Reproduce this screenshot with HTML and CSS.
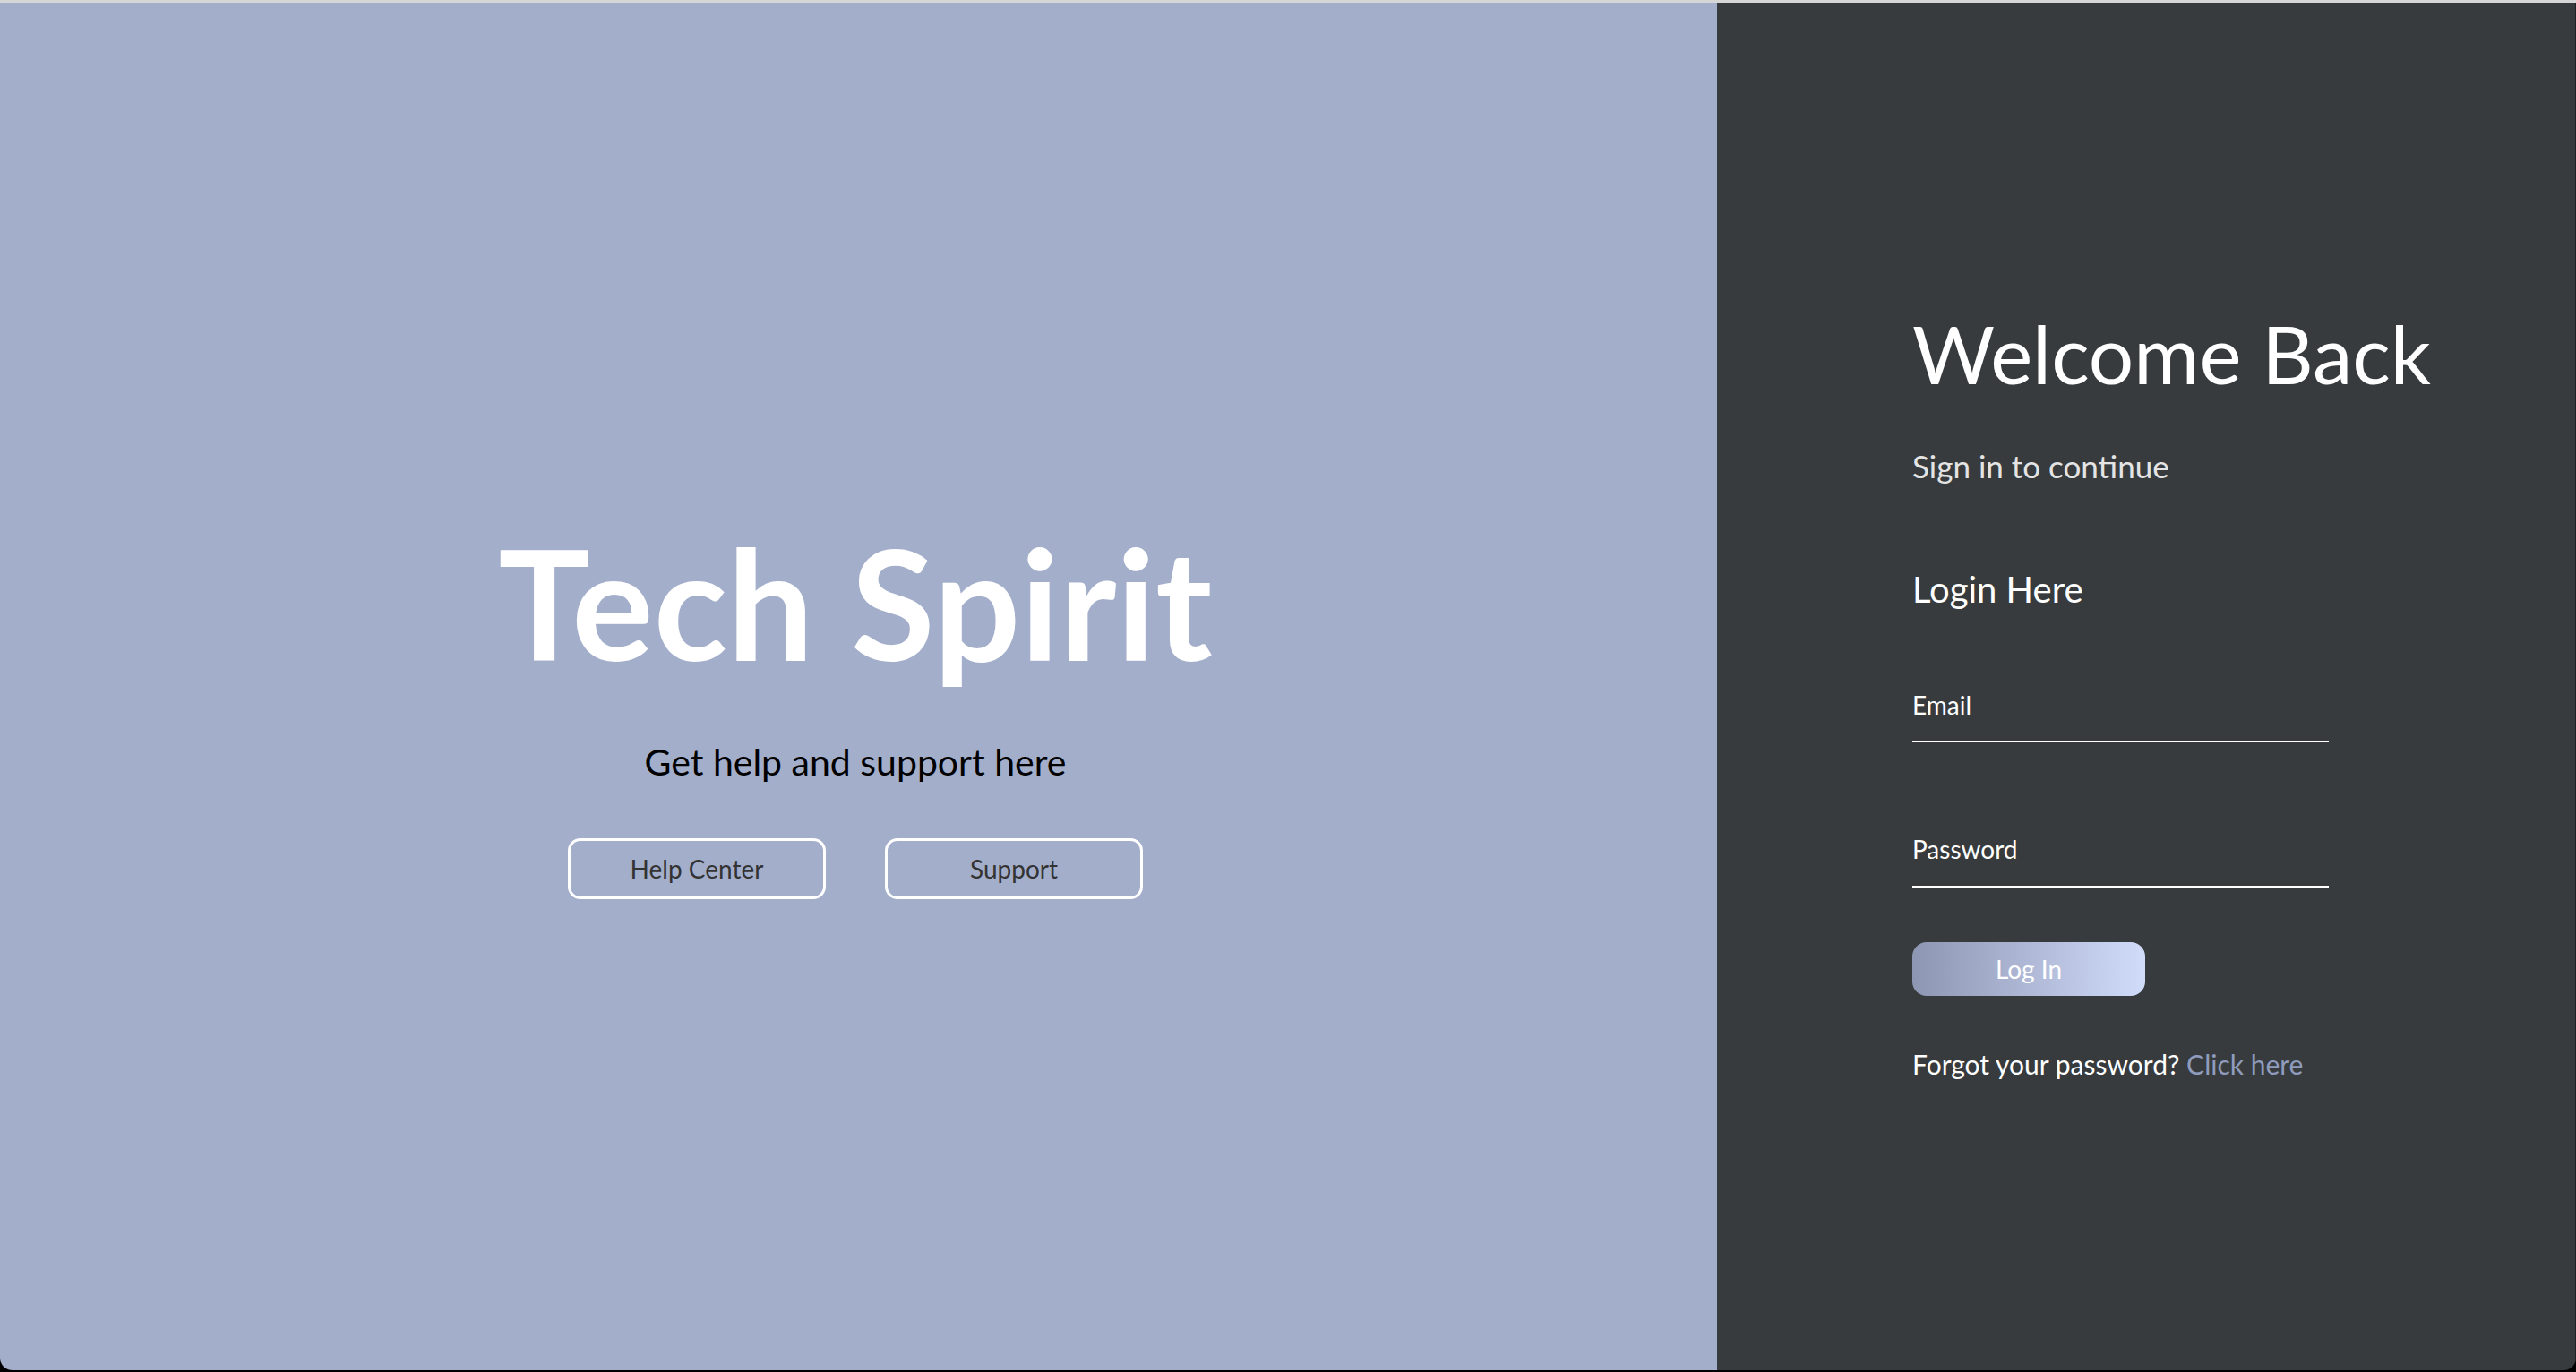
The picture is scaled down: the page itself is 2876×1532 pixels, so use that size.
FILE: index.html
```html
<!DOCTYPE html>
<html lang="en">
<head>
<meta charset="utf-8">
<title>Tech Spirit</title>
<link rel="stylesheet" href="styles.css">
</head>
<body>
<div class="window">
  <section class="hero">
    <div class="hero-inner">
      <h1 class="brand">Tech Spirit</h1>
      <p class="tagline">Get help and support here</p>
      <div class="hero-actions">
        <button class="ghost-btn" type="button">Help Center</button>
        <button class="ghost-btn" type="button">Support</button>
      </div>
    </div>
  </section>
  <section class="login">
    <h2 class="welcome">Welcome Back</h2>
    <p class="sub">Sign in to continue</p>
    <h3 class="login-title">Login Here</h3>
    <form class="form">
      <label class="field-label" for="email">Email</label>
      <input class="field-input" id="email" type="email">
      <label class="field-label field-label--second" for="pw">Password</label>
      <input class="field-input" id="pw" type="password">
      <button class="login-btn" type="button">Log In</button>
    </form>
    <p class="forgot">Forgot your password? <a class="forgot-link" href="#">Click here</a></p>
  </section>
</div>
</body>
</html>
```
FILE: styles.css
```css
* { box-sizing: border-box; }
html, body { margin: 0; padding: 0; }
body {
  background: #000;
  font-family: Lato, "Open Sans", sans-serif;
  height: 100vh;
  overflow: hidden;
}
.window {
  display: flex;
  height: 1530px;
  border-top: 3px solid #d6d6d6;
  border-radius: 0 0 14px 14px;
  overflow: hidden;
}
.hero {
  width: 1917px;
  flex: none;
  background: #a3aecb;
  padding-top: 566px;
  padding-right: 7px;
}
.hero-inner {
  display: flex;
  flex-direction: column;
  align-items: center;
}
.brand {
  margin: 0;
  font-size: 171px;
  line-height: 1.2;
  font-weight: 700;
  color: #fff;
}
.tagline {
  margin: 52px 0 0;
  font-size: 41px;
  line-height: 1.2;
  color: #000;
}
.hero-actions {
  margin-top: 61px;
  display: flex;
  gap: 66px;
}
.ghost-btn {
  width: 288px;
  height: 68px;
  border: 3px solid #fff;
  border-radius: 14px;
  background: transparent;
  font-family: inherit;
  font-size: 28px;
  color: #333;
  padding: 0;
}
.login {
  flex: 1;
  background: #373b3d;
  padding-top: 339px;
  padding-left: 218px;
  color: #fff;
  border-right: 1px solid #1f2223;
}
.welcome {
  margin: 0;
  font-size: 89px;
  line-height: 1.2;
  font-weight: 400;
}
.sub {
  margin: 50px 0 0;
  font-size: 35px;
  line-height: 1.2;
  color: #e4e4e4;
}
.login-title {
  margin: 93px 0 0;
  font-size: 40px;
  line-height: 1.2;
  font-weight: 400;
}
.form {
  margin-top: 89px;
  display: flex;
  flex-direction: column;
  align-items: flex-start;
}
.field-label {
  display: block;
  font-size: 28px;
  line-height: 1.2;
}
.field-label--second { margin-top: 103px; }
.field-input {
  width: 465px;
  height: 25px;
  border: none;
  border-bottom: 2px solid #fff;
  background: transparent;
  outline: none;
  padding: 0;
  color: #fff;
}
.login-btn {
  margin-top: 61px;
  width: 260px;
  height: 60px;
  border: none;
  border-radius: 16px;
  background: linear-gradient(90deg, #8d96b2, #d1dcfb);
  color: #fff;
  font-family: inherit;
  font-size: 28px;
  padding: 0;
}
.forgot {
  margin: 58px 0 0;
  font-size: 30px;
  line-height: 1.2;
}
.forgot-link {
  color: #8f9cbd;
  text-decoration: none;
}
```
